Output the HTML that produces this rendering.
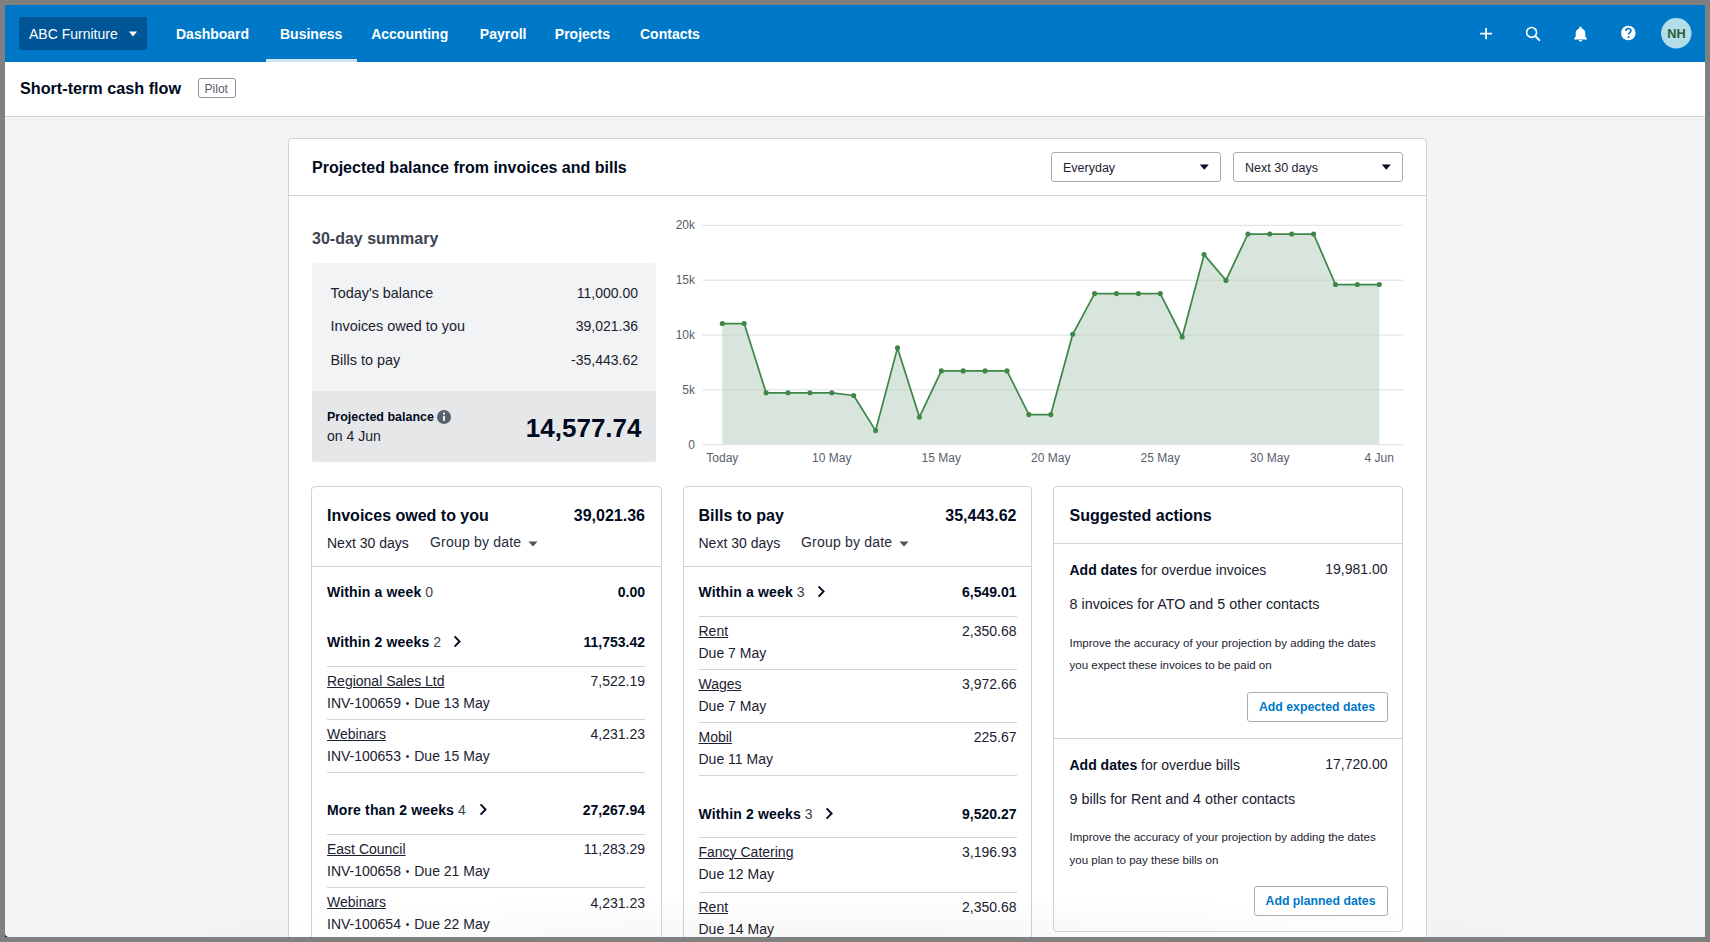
<!DOCTYPE html>
<html><head><meta charset="utf-8"><title>Short-term cash flow</title>
<style>
html,body{margin:0;padding:0;}
body{width:1710px;height:942px;overflow:hidden;background:#808080;position:relative;font-family:"Liberation Sans",sans-serif;}
#clip{position:absolute;left:5px;top:5px;width:1700px;height:932px;overflow:hidden;}
#pg{position:absolute;left:-5px;top:-5px;width:1710px;height:942px;}
.t{position:absolute;white-space:nowrap;line-height:1;}
.r{text-align:right;}
.c{text-align:center;}
u{text-decoration:underline;text-underline-offset:1px;text-decoration-thickness:1px;}
.bl{font-size:10px;position:relative;top:-1px;padding:0 1px;}
</style></head><body><div id="clip"><div id="pg">
<div style="position:absolute;left:5px;top:931px;width:4px;height:6px;background:#0b1020"></div>
<div style="position:absolute;left:5px;top:5px;width:1700px;height:932px;background:#f2f3f4;border-radius:0 0 0 4px"></div>
<div style="position:absolute;left:5px;top:5px;width:1700px;height:57px;background:#0078c8"></div>
<div style="position:absolute;left:19px;top:17px;width:128px;height:33px;background:#005597;border-radius:2px"></div>
<div class="t" style="left:29.0px;top:26.75px;font-size:14px;font-weight:400;color:#fff;">ABC Furniture</div>
<svg style="position:absolute;left:128px;top:31px" width="10" height="6"><path d="M1 0.5h8l-4 5z" fill="#fff"/></svg>
<div class="t" style="left:176.0px;top:27.15px;font-size:14px;font-weight:700;color:#fff;">Dashboard</div>
<div class="t" style="left:280.0px;top:27.15px;font-size:14px;font-weight:700;color:#fff;">Business</div>
<div class="t" style="left:371.2px;top:27.15px;font-size:14px;font-weight:700;color:#fff;">Accounting</div>
<div class="t" style="left:479.8px;top:27.15px;font-size:14px;font-weight:700;color:#fff;">Payroll</div>
<div class="t" style="left:554.8px;top:27.15px;font-size:14px;font-weight:700;color:#fff;">Projects</div>
<div class="t" style="left:640.0px;top:27.15px;font-size:14px;font-weight:700;color:#fff;">Contacts</div>
<div style="position:absolute;left:266px;top:59px;width:91px;height:3px;background:#cfe3f3"></div>
<svg style="position:absolute;left:1470px;top:17px" width="230" height="34" viewBox="1470 17 230 34">
<path d="M1486.1 27.9v11.4M1480.2 33.6h11.8" stroke="#fff" stroke-width="1.8"/>
<circle cx="1531.6" cy="32.4" r="4.95" fill="none" stroke="#fff" stroke-width="1.6"/>
<path d="M1535.2 36l4.1 4.2" stroke="#fff" stroke-width="1.9" stroke-linecap="round"/>
<path d="M1580.5 26.8c-0.8 0-1.3 0.5-1.3 1.2v0.5c-2.2 0.7-3.5 2.6-3.5 4.9v3.2l-1.6 2.2v0.6h12.8v-0.6l-1.6-2.2v-3.2c0-2.3-1.3-4.2-3.5-4.9v-0.5c0-0.7-0.5-1.2-1.3-1.2z M1578.8 39.9a1.7 1.7 0 0 0 3.4 0z" fill="#fff"/>
<circle cx="1628.3" cy="33" r="7.25" fill="#fff"/>
<path d="M1625.9 31c0-1.5 1-2.5 2.5-2.5s2.5 1 2.5 2.2c0 1.8-2.3 1.9-2.3 3.8" fill="none" stroke="#0078c8" stroke-width="1.6"/>
<circle cx="1628.6" cy="36.9" r="1" fill="#0078c8"/>
<circle cx="1676.3" cy="33.3" r="15.2" fill="#b3dde9"/>
</svg>
<div class="t c" style="left:1476.5px;width:400px;top:27.66px;font-size:12.8px;font-weight:700;color:#2c5f36;">NH</div>
<div style="position:absolute;left:5px;top:62px;width:1700px;height:54px;background:#fff;border-bottom:1px solid #d0d3d8"></div>
<div class="t" style="left:20.0px;top:80.08px;font-size:16.2px;font-weight:700;color:#000a1e;">Short-term cash flow</div>
<div style="position:absolute;left:198px;top:78px;width:36px;height:18px;border:1px solid #8d929b;border-radius:3px;background:#fff"></div>
<div class="t" style="left:204.6px;top:83.24px;font-size:12px;font-weight:400;color:#59606d;">Pilot</div>
<div style="position:absolute;left:288px;top:138px;width:1139px;height:900px;background:#fff;border:1px solid #d0d3d8;border-radius:4px;box-sizing:border-box"></div>
<div style="position:absolute;left:289px;top:195px;width:1137px;height:1px;background:#d0d3d8"></div>
<div class="t" style="left:312.0px;top:160.45px;font-size:16px;font-weight:700;color:#000a1e;">Projected balance from invoices and bills</div>
<div style="position:absolute;left:1051px;top:152px;width:170px;height:30px;border:1px solid #a9adb4;border-radius:3px;box-sizing:border-box;background:#fff"></div>
<div class="t" style="left:1063.0px;top:162.22px;font-size:12.5px;font-weight:400;color:#1a2130;">Everyday</div>
<svg style="position:absolute;left:1199px;top:164px" width="11" height="7"><path d="M0.8 0.5h9l-4.5 5.2z" fill="#000a1e"/></svg>
<div style="position:absolute;left:1233px;top:152px;width:170px;height:30px;border:1px solid #a9adb4;border-radius:3px;box-sizing:border-box;background:#fff"></div>
<div class="t" style="left:1245.0px;top:162.22px;font-size:12.5px;font-weight:400;color:#1a2130;">Next 30 days</div>
<svg style="position:absolute;left:1381px;top:164px" width="11" height="7"><path d="M0.8 0.5h9l-4.5 5.2z" fill="#000a1e"/></svg>
<div class="t" style="left:312.0px;top:231.15px;font-size:16px;font-weight:700;color:#3d4350;">30-day summary</div>
<div style="position:absolute;left:312px;top:263px;width:344px;height:199px;background:#f2f3f4;border-radius:3px"></div>
<div style="position:absolute;left:312px;top:391px;width:344px;height:71px;background:#e6e7e9;border-radius:0 0 3px 3px"></div>
<div class="t" style="left:330.5px;top:286.21px;font-size:14.4px;font-weight:400;color:#1a2130;">Today's balance</div>
<div class="t r" style="left:-162.0px;width:800px;top:285.75px;font-size:14px;font-weight:400;color:#1a2130;">11,000.00</div>
<div class="t" style="left:330.5px;top:319.21px;font-size:14.4px;font-weight:400;color:#1a2130;">Invoices owed to you</div>
<div class="t r" style="left:-162.0px;width:800px;top:318.75px;font-size:14px;font-weight:400;color:#1a2130;">39,021.36</div>
<div class="t" style="left:330.5px;top:353.41px;font-size:14.4px;font-weight:400;color:#1a2130;">Bills to pay</div>
<div class="t r" style="left:-162.0px;width:800px;top:352.95px;font-size:14px;font-weight:400;color:#1a2130;">-35,443.62</div>
<div class="t" style="left:327.0px;top:411.02px;font-size:12.5px;font-weight:700;color:#000a1e;">Projected balance</div>
<svg style="position:absolute;left:436px;top:408.5px" width="16" height="16"><circle cx="8" cy="8" r="7" fill="#59606d"/><rect x="7.1" y="6.8" width="1.8" height="5" fill="#fff"/><circle cx="8" cy="4.6" r="1.05" fill="#fff"/></svg>
<div class="t" style="left:327.0px;top:428.65px;font-size:14px;font-weight:400;color:#1a2130;">on 4 Jun</div>
<div class="t r" style="left:-158.5px;width:800px;top:415.49px;font-size:26px;font-weight:700;color:#000a1e;">14,577.74</div>
<svg style="position:absolute;left:660px;top:200px" width="760" height="280" viewBox="660 200 760 280"><rect x="702.5" y="224.8" width="700.5" height="1.2" fill="#e1e3e6"/><rect x="702.5" y="279.6" width="700.5" height="1.2" fill="#e1e3e6"/><rect x="702.5" y="334.4" width="700.5" height="1.2" fill="#e1e3e6"/><rect x="702.5" y="389.2" width="700.5" height="1.2" fill="#e1e3e6"/><rect x="702.5" y="444.0" width="700.5" height="1.2" fill="#e1e3e6"/><polygon points="722.3,444.5 722.3,323.5 744.2,323.5 766.1,392.8 788.0,392.8 809.9,392.8 831.8,392.8 853.7,395.5 875.6,430.6 897.5,347.9 919.4,417.1 941.3,370.9 963.2,370.9 985.1,370.9 1007.0,370.9 1028.9,414.6 1050.8,414.6 1072.7,334.3 1094.6,293.6 1116.5,293.6 1138.4,293.6 1160.3,293.6 1182.2,337.0 1204.1,254.6 1226.0,280.4 1247.9,234.0 1269.8,234.0 1291.7,234.0 1313.6,234.0 1335.5,284.5 1357.4,284.5 1379.3,284.5 1379.3,444.5" fill="#d8e5dc"/><clipPath id="fc"><polygon points="722.3,444.5 722.3,323.5 744.2,323.5 766.1,392.8 788.0,392.8 809.9,392.8 831.8,392.8 853.7,395.5 875.6,430.6 897.5,347.9 919.4,417.1 941.3,370.9 963.2,370.9 985.1,370.9 1007.0,370.9 1028.9,414.6 1050.8,414.6 1072.7,334.3 1094.6,293.6 1116.5,293.6 1138.4,293.6 1160.3,293.6 1182.2,337.0 1204.1,254.6 1226.0,280.4 1247.9,234.0 1269.8,234.0 1291.7,234.0 1313.6,234.0 1335.5,284.5 1357.4,284.5 1379.3,284.5 1379.3,444.5"/></clipPath><g clip-path="url(#fc)"><rect x="722.3" y="224.8" width="657.0" height="1.2" fill="rgba(0,40,10,0.06)"/><rect x="722.3" y="279.6" width="657.0" height="1.2" fill="rgba(0,40,10,0.06)"/><rect x="722.3" y="334.4" width="657.0" height="1.2" fill="rgba(0,40,10,0.06)"/><rect x="722.3" y="389.2" width="657.0" height="1.2" fill="rgba(0,40,10,0.06)"/></g><polyline points="722.3,323.5 744.2,323.5 766.1,392.8 788.0,392.8 809.9,392.8 831.8,392.8 853.7,395.5 875.6,430.6 897.5,347.9 919.4,417.1 941.3,370.9 963.2,370.9 985.1,370.9 1007.0,370.9 1028.9,414.6 1050.8,414.6 1072.7,334.3 1094.6,293.6 1116.5,293.6 1138.4,293.6 1160.3,293.6 1182.2,337.0 1204.1,254.6 1226.0,280.4 1247.9,234.0 1269.8,234.0 1291.7,234.0 1313.6,234.0 1335.5,284.5 1357.4,284.5 1379.3,284.5" fill="none" stroke="#3e8749" stroke-width="1.75" stroke-linejoin="round"/><circle cx="722.3" cy="323.5" r="2.55" fill="#3e8749"/><circle cx="744.2" cy="323.5" r="2.55" fill="#3e8749"/><circle cx="766.1" cy="392.8" r="2.55" fill="#3e8749"/><circle cx="788.0" cy="392.8" r="2.55" fill="#3e8749"/><circle cx="809.9" cy="392.8" r="2.55" fill="#3e8749"/><circle cx="831.8" cy="392.8" r="2.55" fill="#3e8749"/><circle cx="853.7" cy="395.5" r="2.55" fill="#3e8749"/><circle cx="875.6" cy="430.6" r="2.55" fill="#3e8749"/><circle cx="897.5" cy="347.9" r="2.55" fill="#3e8749"/><circle cx="919.4" cy="417.1" r="2.55" fill="#3e8749"/><circle cx="941.3" cy="370.9" r="2.55" fill="#3e8749"/><circle cx="963.2" cy="370.9" r="2.55" fill="#3e8749"/><circle cx="985.1" cy="370.9" r="2.55" fill="#3e8749"/><circle cx="1007.0" cy="370.9" r="2.55" fill="#3e8749"/><circle cx="1028.9" cy="414.6" r="2.55" fill="#3e8749"/><circle cx="1050.8" cy="414.6" r="2.55" fill="#3e8749"/><circle cx="1072.7" cy="334.3" r="2.55" fill="#3e8749"/><circle cx="1094.6" cy="293.6" r="2.55" fill="#3e8749"/><circle cx="1116.5" cy="293.6" r="2.55" fill="#3e8749"/><circle cx="1138.4" cy="293.6" r="2.55" fill="#3e8749"/><circle cx="1160.3" cy="293.6" r="2.55" fill="#3e8749"/><circle cx="1182.2" cy="337.0" r="2.55" fill="#3e8749"/><circle cx="1204.1" cy="254.6" r="2.55" fill="#3e8749"/><circle cx="1226.0" cy="280.4" r="2.55" fill="#3e8749"/><circle cx="1247.9" cy="234.0" r="2.55" fill="#3e8749"/><circle cx="1269.8" cy="234.0" r="2.55" fill="#3e8749"/><circle cx="1291.7" cy="234.0" r="2.55" fill="#3e8749"/><circle cx="1313.6" cy="234.0" r="2.55" fill="#3e8749"/><circle cx="1335.5" cy="284.5" r="2.55" fill="#3e8749"/><circle cx="1357.4" cy="284.5" r="2.55" fill="#3e8749"/><circle cx="1379.3" cy="284.5" r="2.55" fill="#3e8749"/></svg>
<div class="t r" style="left:-105.0px;width:800px;top:219.44px;font-size:12px;font-weight:400;color:#59606d;">20k</div>
<div class="t r" style="left:-105.0px;width:800px;top:274.24px;font-size:12px;font-weight:400;color:#59606d;">15k</div>
<div class="t r" style="left:-105.0px;width:800px;top:329.04px;font-size:12px;font-weight:400;color:#59606d;">10k</div>
<div class="t r" style="left:-105.0px;width:800px;top:383.84px;font-size:12px;font-weight:400;color:#59606d;">5k</div>
<div class="t r" style="left:-105.0px;width:800px;top:438.64px;font-size:12px;font-weight:400;color:#59606d;">0</div>
<div class="t c" style="left:522.3px;width:400px;top:452.04px;font-size:12px;font-weight:400;color:#59606d;">Today</div>
<div class="t c" style="left:631.8px;width:400px;top:452.04px;font-size:12px;font-weight:400;color:#59606d;">10 May</div>
<div class="t c" style="left:741.3px;width:400px;top:452.04px;font-size:12px;font-weight:400;color:#59606d;">15 May</div>
<div class="t c" style="left:850.8px;width:400px;top:452.04px;font-size:12px;font-weight:400;color:#59606d;">20 May</div>
<div class="t c" style="left:960.3px;width:400px;top:452.04px;font-size:12px;font-weight:400;color:#59606d;">25 May</div>
<div class="t c" style="left:1069.8px;width:400px;top:452.04px;font-size:12px;font-weight:400;color:#59606d;">30 May</div>
<div class="t c" style="left:1179.3px;width:400px;top:452.04px;font-size:12px;font-weight:400;color:#59606d;">4 Jun</div>
<div style="position:absolute;left:311px;top:486px;width:351px;height:600px;background:#fff;border:1px solid #d0d3d8;border-radius:4px;box-sizing:border-box"></div>
<div style="position:absolute;left:312px;top:566px;width:349px;height:1px;background:#d0d3d8"></div>
<div class="t" style="left:327.0px;top:508.05px;font-size:16px;font-weight:700;color:#000a1e;">Invoices owed to you</div>
<div class="t r" style="left:-155.0px;width:800px;top:508.05px;font-size:16px;font-weight:700;color:#000a1e;">39,021.36</div>
<div class="t" style="left:327.0px;top:536.35px;font-size:14px;font-weight:400;color:#1a2130;">Next 30 days</div>
<div class="t" style="left:430.0px;top:535.15px;font-size:14px;font-weight:400;color:#252c3a;letter-spacing:0.2px">Group by date</div>
<svg style="position:absolute;left:527.7px;top:540.6px" width="10" height="6"><path d="M0.5 0.5h9l-4.5 5z" fill="#4a505c"/></svg>
<div class="t" style="left:327px;top:584.95px;font-size:14px;color:#000a1e"><b style="letter-spacing:0.15px">Within a week</b> <span style="color:#3d4350">0</span></div>
<div class="t r" style="left:-155.0px;width:800px;top:584.95px;font-size:14px;font-weight:700;color:#000a1e;">0.00</div>
<div class="t" style="left:327px;top:634.55px;font-size:14px;color:#000a1e"><b style="letter-spacing:0.15px">Within 2 weeks</b> <span style="color:#3d4350">2</span></div>
<div class="t r" style="left:-155.0px;width:800px;top:634.55px;font-size:14px;font-weight:700;color:#000a1e;">11,753.42</div>
<svg style="position:absolute;left:453.3px;top:634.8px" width="9" height="13"><path d="M1.6 1.3l5 5.2-5 5.2" fill="none" stroke="#000a1e" stroke-width="1.9"/></svg>
<div style="position:absolute;left:327px;top:665.7px;width:318px;height:1px;background:#d0d3d8"></div>
<div class="t" style="left:327.0px;top:673.75px;font-size:14px;font-weight:400;color:#1a2130;"><u>Regional Sales Ltd</u></div>
<div class="t r" style="left:-155.0px;width:800px;top:673.95px;font-size:14px;font-weight:400;color:#1a2130;">7,522.19</div>
<div class="t" style="left:327.0px;top:695.85px;font-size:14px;font-weight:400;color:#1a2130;">INV-100659 <span class=bl>•</span> Due 13 May</div>
<div style="position:absolute;left:327px;top:718.8000000000001px;width:318px;height:1px;background:#d0d3d8"></div>
<div class="t" style="left:327.0px;top:726.85px;font-size:14px;font-weight:400;color:#1a2130;"><u>Webinars</u></div>
<div class="t r" style="left:-155.0px;width:800px;top:727.05px;font-size:14px;font-weight:400;color:#1a2130;">4,231.23</div>
<div class="t" style="left:327.0px;top:748.95px;font-size:14px;font-weight:400;color:#1a2130;">INV-100653 <span class=bl>•</span> Due 15 May</div>
<div style="position:absolute;left:327px;top:771.9px;width:318px;height:1px;background:#d0d3d8"></div>
<div class="t" style="left:327px;top:803.15px;font-size:14px;color:#000a1e"><b style="letter-spacing:0.15px">More than 2 weeks</b> <span style="color:#3d4350">4</span></div>
<div class="t r" style="left:-155.0px;width:800px;top:803.15px;font-size:14px;font-weight:700;color:#000a1e;">27,267.94</div>
<svg style="position:absolute;left:479.3px;top:803.4px" width="9" height="13"><path d="M1.6 1.3l5 5.2-5 5.2" fill="none" stroke="#000a1e" stroke-width="1.9"/></svg>
<div style="position:absolute;left:327px;top:834.0px;width:318px;height:1px;background:#d0d3d8"></div>
<div class="t" style="left:327.0px;top:842.05px;font-size:14px;font-weight:400;color:#1a2130;"><u>East Council</u></div>
<div class="t r" style="left:-155.0px;width:800px;top:842.25px;font-size:14px;font-weight:400;color:#1a2130;">11,283.29</div>
<div class="t" style="left:327.0px;top:864.15px;font-size:14px;font-weight:400;color:#1a2130;">INV-100658 <span class=bl>•</span> Due 21 May</div>
<div style="position:absolute;left:327px;top:887.1px;width:318px;height:1px;background:#d0d3d8"></div>
<div class="t" style="left:327.0px;top:895.35px;font-size:14px;font-weight:400;color:#1a2130;"><u>Webinars</u></div>
<div class="t r" style="left:-155.0px;width:800px;top:895.55px;font-size:14px;font-weight:400;color:#1a2130;">4,231.23</div>
<div class="t" style="left:327.0px;top:917.45px;font-size:14px;font-weight:400;color:#1a2130;">INV-100654 <span class=bl>•</span> Due 22 May</div>
<div style="position:absolute;left:327px;top:940.4px;width:318px;height:1px;background:#d0d3d8"></div>
<div style="position:absolute;left:683px;top:486px;width:349px;height:600px;background:#fff;border:1px solid #d0d3d8;border-radius:4px;box-sizing:border-box"></div>
<div style="position:absolute;left:684px;top:566px;width:347px;height:1px;background:#d0d3d8"></div>
<div class="t" style="left:698.5px;top:508.05px;font-size:16px;font-weight:700;color:#000a1e;">Bills to pay</div>
<div class="t r" style="left:216.5px;width:800px;top:508.05px;font-size:16px;font-weight:700;color:#000a1e;">35,443.62</div>
<div class="t" style="left:698.5px;top:536.35px;font-size:14px;font-weight:400;color:#1a2130;">Next 30 days</div>
<div class="t" style="left:801.0px;top:535.15px;font-size:14px;font-weight:400;color:#252c3a;letter-spacing:0.2px">Group by date</div>
<svg style="position:absolute;left:898.7px;top:540.6px" width="10" height="6"><path d="M0.5 0.5h9l-4.5 5z" fill="#4a505c"/></svg>
<div class="t" style="left:698.5px;top:584.95px;font-size:14px;color:#000a1e"><b style="letter-spacing:0.15px">Within a week</b> <span style="color:#3d4350">3</span></div>
<div class="t r" style="left:216.5px;width:800px;top:584.95px;font-size:14px;font-weight:700;color:#000a1e;">6,549.01</div>
<svg style="position:absolute;left:817.3px;top:585.1999999999999px" width="9" height="13"><path d="M1.6 1.3l5 5.2-5 5.2" fill="none" stroke="#000a1e" stroke-width="1.9"/></svg>
<div style="position:absolute;left:698.5px;top:615.7px;width:318.0px;height:1px;background:#d0d3d8"></div>
<div class="t" style="left:698.5px;top:623.75px;font-size:14px;font-weight:400;color:#1a2130;"><u>Rent</u></div>
<div class="t r" style="left:216.5px;width:800px;top:623.95px;font-size:14px;font-weight:400;color:#1a2130;">2,350.68</div>
<div class="t" style="left:698.5px;top:645.85px;font-size:14px;font-weight:400;color:#1a2130;">Due 7 May</div>
<div style="position:absolute;left:698.5px;top:668.8000000000001px;width:318.0px;height:1px;background:#d0d3d8"></div>
<div class="t" style="left:698.5px;top:676.95px;font-size:14px;font-weight:400;color:#1a2130;"><u>Wages</u></div>
<div class="t r" style="left:216.5px;width:800px;top:677.15px;font-size:14px;font-weight:400;color:#1a2130;">3,972.66</div>
<div class="t" style="left:698.5px;top:699.05px;font-size:14px;font-weight:400;color:#1a2130;">Due 7 May</div>
<div style="position:absolute;left:698.5px;top:722.0px;width:318.0px;height:1px;background:#d0d3d8"></div>
<div class="t" style="left:698.5px;top:730.15px;font-size:14px;font-weight:400;color:#1a2130;"><u>Mobil</u></div>
<div class="t r" style="left:216.5px;width:800px;top:730.35px;font-size:14px;font-weight:400;color:#1a2130;">225.67</div>
<div class="t" style="left:698.5px;top:752.25px;font-size:14px;font-weight:400;color:#1a2130;">Due 11 May</div>
<div style="position:absolute;left:698.5px;top:775.2px;width:318.0px;height:1px;background:#d0d3d8"></div>
<div class="t" style="left:698.5px;top:807.15px;font-size:14px;color:#000a1e"><b style="letter-spacing:0.15px">Within 2 weeks</b> <span style="color:#3d4350">3</span></div>
<div class="t r" style="left:216.5px;width:800px;top:807.15px;font-size:14px;font-weight:700;color:#000a1e;">9,520.27</div>
<svg style="position:absolute;left:825.3px;top:807.4px" width="9" height="13"><path d="M1.6 1.3l5 5.2-5 5.2" fill="none" stroke="#000a1e" stroke-width="1.9"/></svg>
<div style="position:absolute;left:698.5px;top:836.7px;width:318.0px;height:1px;background:#d0d3d8"></div>
<div class="t" style="left:698.5px;top:845.15px;font-size:14px;font-weight:400;color:#1a2130;"><u>Fancy Catering</u></div>
<div class="t r" style="left:216.5px;width:800px;top:845.35px;font-size:14px;font-weight:400;color:#1a2130;">3,196.93</div>
<div class="t" style="left:698.5px;top:867.25px;font-size:14px;font-weight:400;color:#1a2130;">Due 12 May</div>
<div style="position:absolute;left:698.5px;top:891.5px;width:318.0px;height:1px;background:#d0d3d8"></div>
<div class="t" style="left:698.5px;top:899.65px;font-size:14px;font-weight:400;color:#1a2130;"><u>Rent</u></div>
<div class="t r" style="left:216.5px;width:800px;top:899.85px;font-size:14px;font-weight:400;color:#1a2130;">2,350.68</div>
<div class="t" style="left:698.5px;top:921.75px;font-size:14px;font-weight:400;color:#1a2130;">Due 14 May</div>
<div style="position:absolute;left:698.5px;top:944.7px;width:318.0px;height:1px;background:#d0d3d8"></div>
<div style="position:absolute;left:1053px;top:486px;width:350px;height:446px;background:#fff;border:1px solid #d0d3d8;border-radius:4px;box-sizing:border-box"></div>
<div style="position:absolute;left:1054px;top:542.5px;width:348px;height:1px;background:#d0d3d8"></div>
<div style="position:absolute;left:1054px;top:737.5px;width:348px;height:1px;background:#d0d3d8"></div>
<div class="t" style="left:1069.5px;top:507.55px;font-size:16px;font-weight:700;color:#000a1e;">Suggested actions</div>
<div class="t" style="left:1069.5px;top:563.15px;font-size:14px;color:#1a2130"><b style="color:#000a1e">Add dates</b> for overdue invoices</div>
<div class="t r" style="left:587.5px;width:800px;top:562.35px;font-size:14px;font-weight:400;color:#1a2130;">19,981.00</div>
<div class="t" style="left:1069.5px;top:597.15px;font-size:14.35px;font-weight:400;color:#1a2130;">8 invoices for ATO and 5 other contacts</div>
<div class="t" style="left:1069.5px;top:637.72px;font-size:11.55px;font-weight:400;color:#1a2130;">Improve the accuracy of your projection by adding the dates</div>
<div class="t" style="left:1069.5px;top:660.42px;font-size:11.55px;font-weight:400;color:#1a2130;">you expect these invoices to be paid on</div>
<div style="position:absolute;left:1246.5px;top:691.5px;width:141px;height:30px;border:1px solid #a9adb4;border-radius:3px;box-sizing:border-box;background:#fff"></div>
<div class="t c" style="left:1117.0px;width:400px;top:701.49px;font-size:12.3px;font-weight:700;color:#0078c8;">Add expected dates</div>
<div class="t" style="left:1069.5px;top:757.65px;font-size:14px;color:#1a2130"><b style="color:#000a1e">Add dates</b> for overdue bills</div>
<div class="t r" style="left:587.5px;width:800px;top:756.85px;font-size:14px;font-weight:400;color:#1a2130;">17,720.00</div>
<div class="t" style="left:1069.5px;top:791.65px;font-size:14.35px;font-weight:400;color:#1a2130;">9 bills for Rent and 4 other contacts</div>
<div class="t" style="left:1069.5px;top:832.22px;font-size:11.55px;font-weight:400;color:#1a2130;">Improve the accuracy of your projection by adding the dates</div>
<div class="t" style="left:1069.5px;top:854.92px;font-size:11.55px;font-weight:400;color:#1a2130;">you plan to pay these bills on</div>
<div style="position:absolute;left:1253.5px;top:885.5px;width:134px;height:30px;border:1px solid #a9adb4;border-radius:3px;box-sizing:border-box;background:#fff"></div>
<div class="t c" style="left:1120.5px;width:400px;top:895.49px;font-size:12.3px;font-weight:700;color:#0078c8;">Add planned dates</div>
<div style="position:absolute;left:5px;top:880px;width:1700px;height:57px;background:radial-gradient(ellipse 700px 60px at 850px 70px, rgba(0,0,0,0.045), rgba(0,0,0,0));pointer-events:none"></div>
</div></div></body></html>
